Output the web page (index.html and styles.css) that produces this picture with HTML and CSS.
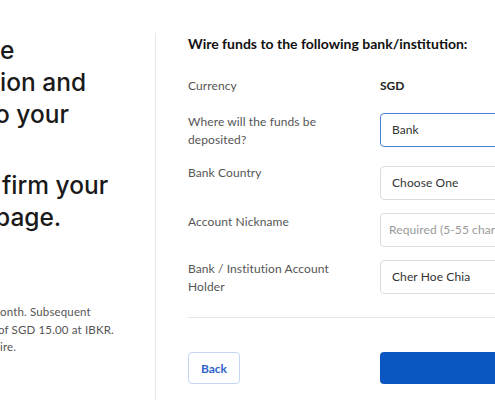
FILE: index.html
```html
<!DOCTYPE html>
<html>
<head>
<meta charset="utf-8">
<link rel="stylesheet" href="styles.css">
</head>
<body>
<div class="page">
  <aside class="intro">
    <div class="headline">
      <p class="para">
        <span class="line">e</span>
        <span class="line">ion and</span>
        <span class="line shift">o your</span>
      </p>
      <p class="para second">
        <span class="line nudge">firm your</span>
        <span class="line shift">page.</span>
      </p>
    </div>
    <p class="note">
      <span class="line">onth. Subsequent</span>
      <span class="line shift-sm">of SGD 15.00 at IBKR.</span>
      <span class="line">ire.</span>
    </p>
  </aside>
  <main class="form">
    <h2 class="title">Wire funds to the following bank/institution:</h2>
    <div class="row row-static">
      <div class="label">Currency</div>
      <div class="value">SGD</div>
    </div>
    <div class="row row-deposit">
      <div class="label">Where will the funds be deposited?</div>
      <div class="field focused">Bank</div>
    </div>
    <div class="row row-country">
      <div class="label">Bank Country</div>
      <div class="field">Choose One</div>
    </div>
    <div class="row">
      <div class="label">Account Nickname</div>
      <div class="field placeholder">Required (5-55 characters)</div>
    </div>
    <div class="row">
      <div class="label">Bank / Institution Account Holder</div>
      <div class="field">Cher Hoe Chia</div>
    </div>
    <hr class="rule">
    <div class="actions">
      <button class="btn-back">Back</button>
      <button class="btn-primary">Continue</button>
    </div>
  </main>
</div>
</body>
</html>
```
FILE: styles.css
```css
html, body {
  margin: 0;
  padding: 0;
  background: #ffffff;
  overflow: hidden;
  width: 495px;
  height: 400px;
}
body {
  font-family: "Lato", "Liberation Sans", sans-serif;
  color: #222;
}
.page {
  display: flex;
  align-items: flex-start;
  height: 400px;
}
.intro {
  flex: none;
  width: 156px;
  margin-top: 33px;
  height: 367px;
  border-right: 1px solid #e9e9e9;
  box-sizing: border-box;
  white-space: nowrap;
}
.line {
  display: block;
}
.headline {
  font-family: "Inter", "Lato", sans-serif;
  font-size: 24.5px;
  line-height: 32px;
  font-weight: 500;
  color: #1a1a1a;
  letter-spacing: 0;
  padding-top: 1px;
}
.para {
  margin: 0;
}
.para.second {
  margin-top: 39px;
}
.shift {
  margin-left: -5px;
}
.nudge {
  margin-left: 2px;
}
.note {
  margin: 70px 0 0 0;
  font-size: 11.5px;
  line-height: 17.5px;
  letter-spacing: 0.15px;
  color: #555;
}
.shift-sm {
  margin-left: -2px;
}
.form {
  flex: 1;
  padding: 34px 0 0 32px;
  min-width: 0;
}
.title {
  margin: 0;
  font-size: 14px;
  line-height: 20px;
  font-weight: 700;
  color: #111;
  white-space: nowrap;
}
.row {
  display: flex;
  align-items: flex-start;
  margin-top: 13px;
}
.row-static {
  margin-top: 23px;
}
.row-deposit {
  margin-top: 18px;
}
.row-country {
  margin-top: 18px;
}
.label {
  width: 192px;
  flex: none;
  font-size: 12px;
  line-height: 17.5px;
  color: #555;
  padding-right: 40px;
  box-sizing: border-box;
  letter-spacing: 0.1px;
}
.row-country .label {
  margin-top: -2px;
}
.row-static .label {
  line-height: 18px;
}
.value {
  font-size: 12px;
  line-height: 18px;
  font-weight: 700;
  color: #222;
}
.field {
  width: 200px;
  flex: none;
  height: 34px;
  box-sizing: border-box;
  border: 1px solid #dcdcdc;
  border-radius: 4px;
  padding: 0 11px;
  font-size: 12px;
  line-height: 32px;
  color: #333;
  white-space: nowrap;
  overflow: hidden;
  letter-spacing: 0.1px;
}
.field.focused {
  border: 1.5px solid #4a7fd6;
  line-height: 31px;
}
.field.placeholder {
  color: #9a9a9a;
  padding-left: 8px;
}
.rule {
  margin: 22px 0 0 0;
  border: none;
  border-top: 1px solid #e6e6e6;
  height: 0;
}
.actions {
  display: flex;
  margin-top: 34px;
}
.btn-back {
  flex: none;
  width: 52px;
  height: 32px;
  box-sizing: border-box;
  border: 1px solid #c4d6f2;
  border-radius: 4px;
  background: #fff;
  color: #2e64c9;
  font-family: inherit;
  font-size: 12px;
  font-weight: 700;
  padding: 0;
  margin-right: 140px;
}
.btn-primary {
  width: 200px;
  flex: none;
  height: 32px;
  border: none;
  border-radius: 4px;
  background: #0b57c2;
  color: #0b57c2;
  font-family: inherit;
  font-size: 12px;
}
```
